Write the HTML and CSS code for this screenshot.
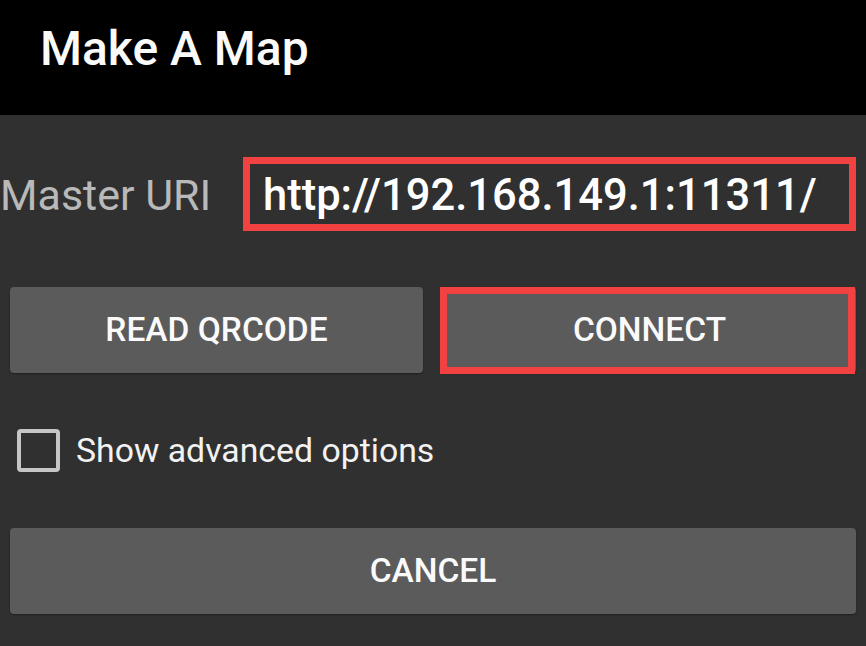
FILE: index.html
```html
<!DOCTYPE html>
<html lang="en">
<head>
<meta charset="utf-8">
<title>Make A Map</title>
<link rel="stylesheet" href="styles.css">
</head>
<body>
<header class="titlebar">
  <h1 class="title">Make A Map</h1>
</header>
<main class="dialog">
  <div class="uri-row">
    <label class="uri-label" for="uri">Master URI</label>
    <div class="uri-field" id="uri">http://192.168.149.1:11311/</div>
  </div>
  <div class="btn-row">
    <button class="btn">READ QRCODE</button>
    <button class="btn btn-marked">CONNECT</button>
  </div>
  <div class="check-row">
    <span class="checkbox"></span>
    <span class="check-label">Show advanced options</span>
  </div>
  <button class="btn btn-wide">CANCEL</button>
</main>
</body>
</html>
```

FILE: styles.css
```css
* { box-sizing: border-box; }

html, body {
  margin: 0;
  padding: 0;
  background: #303030;
  font-family: Roboto, "Noto Sans", "Liberation Sans", sans-serif;
  color: #fff;
}

body {
  width: 866px;
  height: 646px;
  overflow: hidden;
}

.titlebar {
  background: #000;
  height: 115px;
  padding: 25px 0 0 40px;
}

.title {
  margin: 0;
  font-size: 48px;
  line-height: 48px;
  font-weight: 500;
  color: #fafafa;
}

.dialog {
  padding: 42px 10px 0 0;
  display: flex;
  flex-direction: column;
}

.uri-row {
  display: flex;
  align-items: baseline;
  height: 74px;
}

.uri-label {
  font-size: 43px;
  line-height: 43px;
  color: #b9b9b9;
  width: 243px;
  flex: none;
}

.uri-field {
  width: 615px;
  height: 74px;
  border: 7px solid #f24141;
  padding: 10px 0 0 13px;
  font-size: 43.5px;
  line-height: 43px;
  font-weight: 500;
  color: #fff;
  white-space: nowrap;
}

.btn-row {
  margin-top: 56px;
  margin-left: 10px;
  display: grid;
  grid-template-columns: 413px 413px;
  column-gap: 20px;
}

.btn {
  height: 86px;
  border: none;
  border-radius: 4px;
  background: #5b5b5b;
  color: #fafafa;
  font-family: Roboto, "Noto Sans", "Liberation Sans", sans-serif;
  font-size: 33.5px;
  line-height: 34px;
  font-weight: 500;
  padding: 0;
  box-shadow: 0 1px 2px rgba(0, 0, 0, 0.35);
}

.btn-marked {
  position: relative;
}

.btn-marked::after {
  content: "";
  position: absolute;
  left: -3px;
  top: 0;
  right: 1px;
  bottom: -1px;
  border: 7px solid #f24141;
}

.check-row {
  margin-top: 56px;
  margin-left: 17px;
  display: flex;
  align-items: center;
  gap: 16px;
  height: 43px;
}

.checkbox {
  width: 43px;
  height: 43px;
  border: 4px solid #c6c6c6;
  border-radius: 4px;
  flex: none;
}

.check-label {
  font-size: 33.8px;
  line-height: 34px;
  color: #f2f2f2;
}

.btn-wide {
  margin-top: 56px;
  margin-left: 10px;
  width: 846px;
}
```
